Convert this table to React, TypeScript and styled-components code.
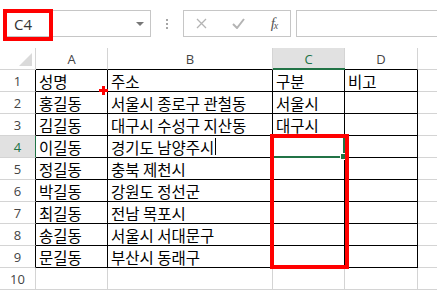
import styled, { createGlobalStyle } from 'styled-components';

const GlobalStyle = createGlobalStyle`
  html, body {
    margin: 0;
    background: #fff;
  }
  body {
    font-family: "Noto Sans CJK KR", "Noto Sans", sans-serif;
    overflow: hidden;
  }
`;

const GREEN = '#217346';
const GRID = '#d4d4d4';
const MARK = '#ff0000';

const Window = styled.div`
  position: relative;
  width: 437px;
  height: 290px;
  overflow: hidden;
  background: #fff;
`;

/* ---------- formula bar ---------- */

const FormulaBar = styled.div`
  display: flex;
  align-items: flex-start;
  height: 48px;
  padding-top: 10px;
  box-sizing: border-box;
`;

const NameBox = styled.div`
  position: relative;
  display: flex;
  align-items: center;
  justify-content: space-between;
  width: 148px;
  height: 27px;
  margin-left: 3px;
  padding: 0 6px 0 10px;
  box-sizing: border-box;
  border: 1px solid #c6c6c6;
  font-family: "Open Sans", "Liberation Sans", sans-serif;
  font-size: 15px;
  color: #333;
`;

const DropArrow = styled.span`
  width: 0;
  height: 0;
  border-left: 4px solid transparent;
  border-right: 4px solid transparent;
  border-top: 4px solid #777;
`;

const Highlight = styled.div<{ $left: number; $top: number; $w: number; $h: number; $t: number }>`
  position: absolute;
  left: ${(p) => p.$left}px;
  top: ${(p) => p.$top}px;
  width: ${(p) => p.$w}px;
  height: ${(p) => p.$h}px;
  border: ${(p) => p.$t}px solid ${MARK};
  box-sizing: border-box;
  pointer-events: none;
  z-index: 5;
`;

const Grip = styled.div`
  display: flex;
  flex-direction: column;
  align-items: center;
  justify-content: center;
  gap: 2px;
  width: 32px;
  height: 27px;

  span {
    width: 2px;
    height: 2px;
    background: #a6a6a6;
  }
`;

const Buttons = styled.div`
  display: flex;
  align-items: center;
  width: 108px;
  height: 27px;
  box-sizing: border-box;
  border: 1px solid #c6c6c6;
`;

const Btn = styled.div<{ $w: number }>`
  display: flex;
  align-items: center;
  justify-content: center;
  width: ${(p) => p.$w}px;
  height: 100%;
`;

const Fx = styled.span`
  font-family: "Liberation Serif", serif;
  font-style: italic;
  font-size: 15px;
  color: #555;
  letter-spacing: -1px;

  sub {
    font-size: 10px;
    vertical-align: -1px;
  }
`;

const Input = styled.div`
  flex: 1;
  height: 27px;
  margin-left: 5px;
  margin-right: -4px;
  box-sizing: border-box;
  border: 1px solid #c6c6c6;
`;

/* ---------- sheet ---------- */

const Sheet = styled.div`
  position: relative;
  display: grid;
  grid-template-columns: 36px 72px 165px 72px 73px 80px;
  grid-template-rows: 22px repeat(10, 22px);
  width: 498px;
`;

const Cell = styled.div<{ $right: string; $bottom: string }>`
  display: flex;
  align-items: center;
  padding-left: 3px;
  box-sizing: border-box;
  border-right: 1px solid ${(p) => p.$right};
  border-bottom: 1px solid ${(p) => p.$bottom};
  font-size: 15.5px;
  color: #000;
  white-space: nowrap;
  overflow: visible;
`;

const Head = styled.div<{ $active?: boolean; $right: string; $bottom: string }>`
  position: relative;
  display: flex;
  align-items: center;
  justify-content: center;
  box-sizing: border-box;
  border-right: 1px solid ${(p) => p.$right};
  border-bottom: 1px solid ${(p) => p.$bottom};
  background: ${(p) => (p.$active ? '#e1e1e1' : '#fff')};
  font-family: "Open Sans", "Liberation Sans", sans-serif;
  font-size: 13px;
  color: ${(p) => (p.$active ? GREEN : '#444')};
`;

const ColUnderline = styled.div`
  position: absolute;
  left: 0;
  right: -1px;
  bottom: -1px;
  height: 2px;
  background: ${GREEN};
`;

const Corner = styled.div`
  position: relative;
  box-sizing: border-box;
  border-right: 1px solid ${GRID};
  border-bottom: 1px solid ${GRID};

  &::after {
    content: '';
    position: absolute;
    right: 3px;
    bottom: 3px;
    border-left: 13px solid transparent;
    border-bottom: 13px solid #dadada;
  }
`;

const Caret = styled.span`
  display: inline-block;
  width: 1px;
  height: 17px;
  margin-left: 1px;
  background: #000;
`;

const ActiveCell = styled.div`
  position: absolute;
  left: 271px;
  top: 86px;
  width: 74px;
  height: 24px;
  box-sizing: border-box;
  border: 2px solid ${GREEN};
  z-index: 3;

  &::after {
    content: '';
    position: absolute;
    right: -4px;
    bottom: -4px;
    width: 5px;
    height: 5px;
    background: ${GREEN};
    border: 1px solid #fff;
  }
`;

const Cross = styled.div`
  position: absolute;
  left: 99px;
  top: 38px;
  width: 9px;
  height: 9px;
  z-index: 4;

  &::before,
  &::after {
    content: '';
    position: absolute;
    background: ${MARK};
  }
  &::before {
    left: 0;
    right: 0;
    top: 3px;
    height: 3px;
  }
  &::after {
    top: 0;
    bottom: 0;
    left: 3px;
    width: 3px;
  }
`;

const people: string[][] = [
  ['성명', '주소', '구분', '비고'],
  ['홍길동', '서울시 종로구 관철동', '서울시', ''],
  ['김길동', '대구시 수성구 지산동', '대구시', ''],
  ['이길동', '경기도 남양주시', '', ''],
  ['정길동', '충북 제천시', '', ''],
  ['박길동', '강원도 정선군', '', ''],
  ['최길동', '전남 목포시', '', ''],
  ['송길동', '서울시 서대문구', '', ''],
  ['문길동', '부산시 동래구', '', ''],
  ['', '', '', ''],
];

// column E sits past the right edge, so its letter stays blank
const letters = ['A', 'B', 'C', 'D', ''];

export default function App() {
  const rows = people.length;

  return (
    <Window>
      <GlobalStyle />
      <FormulaBar>
        <NameBox>
          <span>C4</span>
          <DropArrow />
          <Highlight $left={-1} $top={-2} $w={50} $h={32} $t={4} />
        </NameBox>
        <Grip>
          <span />
          <span />
          <span />
        </Grip>
        <Buttons>
          <Btn $w={34}>
            <svg width="11" height="11" viewBox="0 0 11 11">
              <path d="M1 1l9 9M10 1l-9 9" stroke="#b4b4b4" strokeWidth="1.3" fill="none" />
            </svg>
          </Btn>
          <Btn $w={40}>
            <svg width="13" height="11" viewBox="0 0 13 11">
              <path d="M1 6l4 4 7-9" stroke="#b4b4b4" strokeWidth="2" fill="none" />
            </svg>
          </Btn>
          <Btn $w={32}>
            <Fx>
              f<sub>x</sub>
            </Fx>
          </Btn>
        </Buttons>
        <Input />
      </FormulaBar>

      <Sheet>
        <Corner />
        {letters.map((l, i) => (
          <Head
            key={i}
            $active={l === 'C'}
            $right={GRID}
            $bottom={i < 4 ? '#000' : GRID}
          >
            {l}
            {l === 'C' && <ColUnderline />}
          </Head>
        ))}

        {people.map((row, r) => {
          const inTable = r < rows - 1;
          const isActive = r === 3;
          return [
            <Head
              key={`h${r}`}
              $active={isActive}
              $right={isActive ? GREEN : inTable ? '#000' : GRID}
              $bottom={GRID}
            >
              {r + 1}
            </Head>,
            ...row.map((text, c) => {
              const edge = inTable ? '#000' : GRID;
              return (
                <Cell key={`${r}-${c}`} $right={edge} $bottom={edge}>
                  {text}
                  {r === 3 && c === 1 && <Caret />}
                </Cell>
              );
            }),
            <Cell key={`${r}-e`} $right={GRID} $bottom={GRID} />,
          ];
        })}

        <ActiveCell />
        <Highlight $left={270} $top={86} $w={79} $h={135} $t={4} />
        <Cross />
      </Sheet>
    </Window>
  );
}
